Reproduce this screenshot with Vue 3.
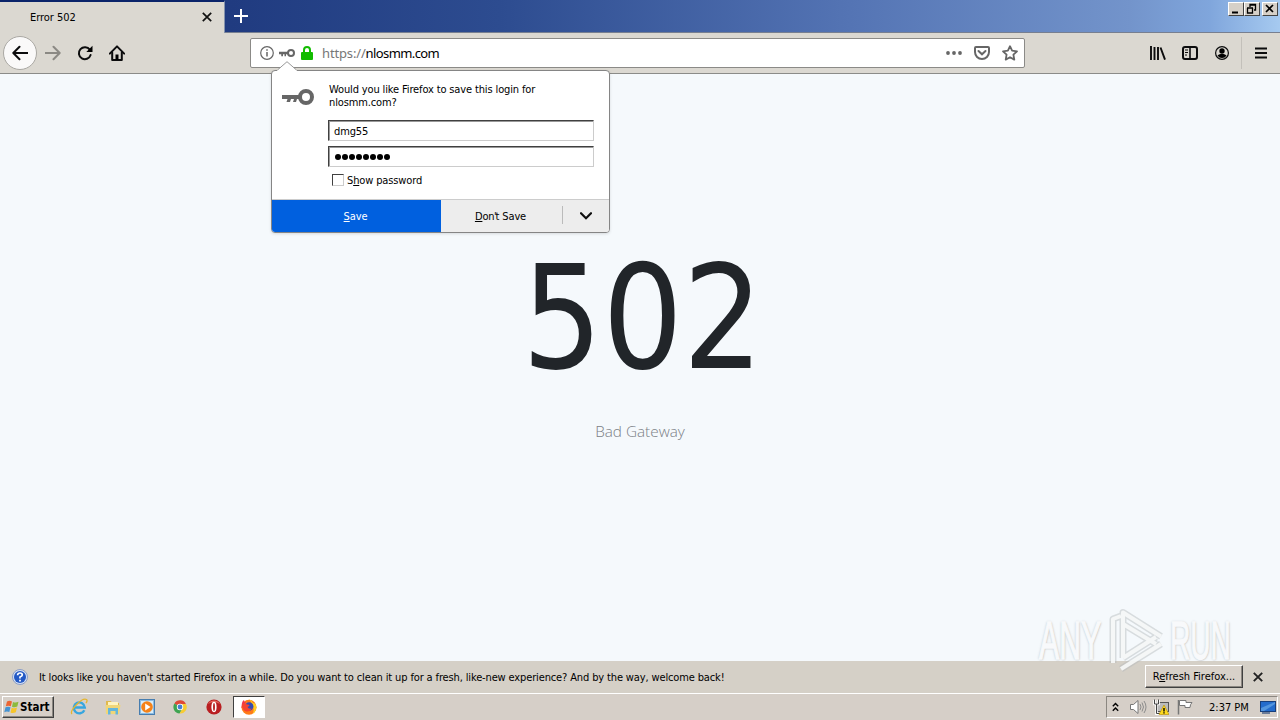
<template>
  <div class="screen">
    <header class="tabstrip">
      <div class="tab">
        <span class="t tab-title">Error 502</span>
        <svg class="tab-close" width="10" height="10" viewBox="0 0 10 10"><path d="M.8.8l8.4 8.4M9.200.8L.8 9.200" stroke="#111" stroke-width="1.7" /></svg>
      </div>
      <svg class="newtab" width="14" height="14" viewBox="0 0 14 14"><path d="M7 0v14M0 7h14" stroke="#fff" stroke-width="2" /></svg>
      <div class="winbtns">
        <span class="wb"><svg width="14" height="12" viewBox="0 0 14 12"><path d="M3 9.500h6" stroke="#000" stroke-width="2" /></svg></span>
        <span class="wb"><svg width="14" height="12" viewBox="0 0 14 12"><path d="M5 4V1.500h5.500V7H9M4.500 2h6.500M2.500 5v5h5V5M2 5h6" fill="none" stroke="#000" stroke-width="1.300" /></svg></span>
        <span class="wb last"><svg width="14" height="12" viewBox="0 0 14 12"><path d="M3 2l7 7M10 2L3 9" stroke="#000" stroke-width="1.700" /></svg></span>
      </div>
    </header>

    <nav class="toolbar">
      <div class="nav-left">
        <span class="back"><svg width="16" height="16" viewBox="0 0 16 16"><path d="M15.500 8H1.500M7.500 1.800L1.300 8l6.200 6.200" class="ln" /></svg></span>
        <svg class="fwd" width="16" height="16" viewBox="0 0 16 16"><path d="M.5 8h14M8.500 1.800L14.700 8l-6.200 6.200" class="ln" /></svg>
        <svg class="reload" width="16" height="16" viewBox="0 0 16 16"><path d="M12.800 4.700A6 6 0 1 0 13.600 10" class="ln" /><path d="M15.500.8v6.200H9.300z" /></svg>
        <svg class="home" width="16" height="16" viewBox="0 0 16 16"><path d="M.8 8.600L8 1.400l7.200 7.200" class="ln" /><path d="M3.200 7.500V15h9.600V7.500" class="ln" /><path d="M6.500 15V9.500h3V15z" /></svg>
      </div>
      <div class="urlbar">
        <svg class="info" width="14" height="14" viewBox="0 0 14 14"><circle cx="7" cy="7" r="6.300" fill="none" stroke="#666" stroke-width="1.200" /><path d="M7 6v4.500M7 3.200v1.600" stroke="#666" stroke-width="1.500" /></svg>
        <svg class="key-s" width="16" height="8" viewBox="0 0 32 16"><path d="M0 5.500h18v5h-4v4h-3v-4H8v4H4.500v-4H0z" fill="#666" /><circle cx="24" cy="8" r="6" fill="none" stroke="#666" stroke-width="4" /></svg>
        <svg class="lock" width="12" height="14" viewBox="0 0 12 14"><path d="M3 7V4a3 3 0 0 1 6 0v3" fill="none" stroke="#12bc00" stroke-width="2" /><rect y="6" width="12" height="8" rx="1" fill="#12bc00" /></svg>
        <span class="url"><i>https://</i>nlosmm.com</span>
        <svg class="dots" width="16" height="4" viewBox="0 0 16 4"><circle v-for="x in [2, 8, 14]" :key="x" :cx="x" cy="2" r="1.900" fill="#666" /></svg>
        <svg class="pocket" width="16" height="14" viewBox="0 0 16 14"><path d="M2 1h12q1 0 1 1v4a7 7 0 0 1-14 0V2q0-1 1-1z" fill="none" stroke="#666" stroke-width="2" /><path d="M4.500 5L8 8.300 11.500 5" fill="none" stroke="#666" stroke-width="2" stroke-linecap="round" /></svg>
        <svg class="star" width="16" height="16" viewBox="0 0 16 16"><path d="M8 1.200l2.100 4.500 4.900.6-3.600 3.400.9 4.900L8 12.200l-4.300 2.400.9-4.900L1 6.300l4.900-.6z" fill="none" stroke="#666" stroke-width="1.800" stroke-linejoin="round" /></svg>
      </div>
      <div class="nav-right">
        <svg width="16" height="14" viewBox="0 0 16 14"><path d="M1 0v14M4.500 1v13M8 1v13M10.500 1.500L15 13.700" stroke="#0c0c0d" stroke-width="1.900" /></svg>
        <svg width="16" height="14" viewBox="0 0 16 14"><rect x="1" y="1" width="14" height="12" rx="2" fill="none" stroke="#0c0c0d" stroke-width="2" /><path d="M8 1v12" stroke="#0c0c0d" stroke-width="1.600" /><path d="M3 4h3M3 6.500h3M3 9h2" stroke="#0c0c0d" /></svg>
        <svg class="user" width="14" height="14" viewBox="0 0 14 14"><circle cx="7" cy="7" r="6.400" fill="none" stroke="#0c0c0d" stroke-width="1.200" /><circle cx="7" cy="5" r="2.700" /><path d="M2.500 9.500Q4 8 5.500 8h3Q10 8 11.500 9.500 10 12 7 12T2.500 9.500z" /></svg>
        <span class="vsep"></span>
        <svg class="menu" width="12" height="12" viewBox="0 0 12 12"><path d="M0 1.500h12M0 6h12M0 10.500h12" stroke="#0c0c0d" stroke-width="1.900" /></svg>
      </div>
    </nav>

    <main class="page">
      <h1>502</h1>
      <p>Bad Gateway</p>
    </main>

    <footer class="notice">
      <svg class="help" width="16" height="16" viewBox="0 0 16 16"><circle cx="8" cy="8" r="7.500" fill="#d5e0f4" stroke="#8b9dc5" /><circle cx="8" cy="8" r="6" fill="#2359c5" /><path d="M5.600 6.200Q5.700 4 8 4t2.300 2Q10.300 7.200 8 8v1.400M8 10.700v1.700" fill="none" stroke="#fff" stroke-width="1.700" /></svg>
      <span class="t msg">It looks like you haven't started Firefox in a while. Do you want to clean it up for a fresh, like-new experience? And by the way, welcome back!</span>
      <button class="t refresh">R<u>e</u>fresh Firefox...</button>
      <svg class="n-close" width="10" height="10" viewBox="0 0 10 10"><path d="M.8.8l8.400 8.400M9.200.8L.8 9.200" stroke="#222" stroke-width="1.900" /></svg>
    </footer>

    <footer class="taskbar">
      <button class="start">
        <svg width="16" height="16" viewBox="0 0 16 16"><path d="M3 2.500q2.500-1.500 5 0L6.800 7.300q-2.500-1.300-5 0z" fill="#ec6532" /><path d="M9 3q2.500 1.300 5.500-.2L13.300 7.500q-2.800 1.400-5.300.2z" fill="#8cba3e" /><path d="M1.500 8.300q2.500-1.300 5 0L5.300 13q-2.500-1.300-5 .2z" fill="#4593d2" /><path d="M7.700 8.700q2.500 1.300 5.300-.1l-1.200 4.700q-2.800 1.500-5.300.2z" fill="#f6c52b" /></svg>
        <b>Start</b>
      </button>
      <div class="apps">
        <svg width="18" height="18" viewBox="0 0 18 18"><path d="M14.300 12.200A5.500 5.500 0 1 1 14.800 9.500H5" fill="none" stroke="#37a6df" stroke-width="2.400" /><path d="M2 16C-1 13 12-1 16.500 1.500q1.300 1.200-.5 3.500" fill="none" stroke="#e5b52d" stroke-width="1.300" /></svg>
        <svg width="18" height="18" viewBox="0 0 18 18"><path d="M2 3h5l1 2h7v11H2z" fill="#e0b94e" /><path d="M4 4h10v5H4z" fill="#fff4c0" /><path d="M1.500 7h15L15 16H2z" fill="#f0d678" /><path d="M4 10h10v6.500h-2.500V13h-5v3.500H4z" fill="#64b6dc" /></svg>
        <svg width="18" height="18" viewBox="0 0 18 18"><rect x="1.500" y="1.500" width="15" height="15" fill="#8bbce3" stroke="#477daf" /><rect x="3" y="3" width="12" height="12" fill="#d9edf9" /><circle cx="9" cy="9" r="5.800" fill="#f58218" /><path d="M7.200 5.500v7L12.500 9z" fill="#fff" /></svg>
        <svg width="18" height="18" viewBox="0 0 18 18"><path d="M9 9L3.400 5.500A6.500 6.500 0 0 1 15 6.200H9z" fill="#df4937" /><path d="M9 9l-5.600-3.500A6.500 6.500 0 0 0 8.500 15.500L12 10z" fill="#3fa452" /><path d="M9 6h6A6.500 6.500 0 0 1 8.500 15.500L12 10z" fill="#f7cc32" /><circle cx="9" cy="9" r="3.200" fill="#fff" /><circle cx="9" cy="9" r="2.400" fill="#467fd1" /></svg>
        <svg width="18" height="18" viewBox="0 0 18 18"><circle cx="9" cy="9" r="7.600" fill="#b91e21" /><path d="M3 6a7 7 0 0 1 12 0Q9 2 3 6z" fill="#e66b60" /><ellipse cx="9" cy="9" rx="2.600" ry="5.200" fill="#fff" /><ellipse cx="9" cy="9" rx="1" ry="4" fill="#b92a2a" /></svg>
      </div>
      <div class="active">
        <svg width="18" height="18" viewBox="0 0 18 18"><circle cx="9" cy="9.300" r="7.500" fill="#ff7b18" /><path d="M9 1q3 1.500 4 4 2-.5 3 2 1.500 6-3.500 9Q16 10 9 1z" fill="#ffcf26" /><path d="M1.700 7Q2 3 4 2q0 2 2 2.500L1.500 10z" fill="#f2374a" /><circle cx="9.200" cy="8.500" r="4.200" fill="#384bb2" /><path d="M2 7q2-2.500 5-.5 2.500 0 2.500 1.200L7.500 9q1 2.500 4.500 1.500Q9 15 5 13q-3-2-3-6z" fill="#f64531" /></svg>
      </div>
      <div class="tray">
        <svg class="chev" width="7" height="10" viewBox="0 0 7 10"><path d="M.8 4.200l2.700-2.700 2.700 2.700M.8 8.700L3.500 6l2.700 2.700" fill="none" stroke="#000" stroke-width="1.400" /></svg>
        <svg class="vol" width="18" height="16" viewBox="0 0 18 16"><path d="M1.500 5.500h3L9 1.500v13l-4.500-4h-3z" fill="#fff" stroke="#777" /><path d="M11 5q2 3 0 6M13 3.500q3 4.500 0 9M15 2q4 6 0 12" fill="none" stroke="#8c8c8c" /></svg>
        <svg class="net" width="16" height="16" viewBox="0 0 16 16"><rect x="4.500" y="3.500" width="11" height="9" fill="#bbb" stroke="#555" /><path d="M1.500 1v4h4V1M3.500 5v10h4" fill="none" stroke="#fff" stroke-width="2.600" /><path d="M1.500.5v4.500h4V.5M3.500 5v9.500H8" fill="none" stroke="#444" /><path d="M11 6l5 9.500H6z" fill="#ffda1e" stroke="#b58b00" stroke-width=".6" /><path d="M11 9v3.500M11 13.300v1.200" stroke="#000" stroke-width="1.400" /></svg>
        <svg class="flag" width="16" height="16" viewBox="0 0 16 16"><path d="M1.500 1v14.500" stroke="#777" stroke-width="1.500" /><path d="M2.500 1.500H9v2h6q-2 2-2 5H8v-2H2.500z" fill="#fff" stroke="#777" /></svg>
        <span class="t clock">2:37 PM</span>
        <svg class="desk" width="16" height="13" viewBox="0 0 16 13"><rect x=".5" y=".5" width="15" height="10" fill="#246ccc" stroke="#183f7b" /><path d="M1 7L15 1v2L4 10H1z" fill="#5396de" /><path d="M2 12h8" stroke="#476189" stroke-width="1.500" /></svg>
      </div>
    </footer>

    <section class="popup">
      <svg class="arrow" width="20" height="10" viewBox="0 0 20 10"><path d="M0 10V9.500L10 .7l10 8.800v.5z" fill="#fff" /><path d="M.5 9L10 .7 19.500 9" fill="none" stroke="#999" /></svg>
      <div class="popup-body">
        <svg class="key" width="32" height="16" viewBox="0 0 32 16"><path d="M0 6h18v4h-3l-1 3h-3l1-3H9l-1 3H4.500l1-3H0z" fill="#666" /><circle cx="24" cy="8" r="6" fill="none" stroke="#666" stroke-width="4" /></svg>
        <div class="popup-form">
          <p class="t ask">Would you like Firefox to save this login for<br><span>nlosmm.com?</span></p>
          <div class="t field">dmg55</div>
          <div class="field pw"><i v-for="n in 8" :key="n"></i></div>
          <label class="t show"><i></i><span>S<u>h</u>ow password</span></label>
        </div>
      </div>
      <div class="t actions">
        <div class="save"><span><u>S</u>ave</span></div>
        <div class="dont"><span><u>D</u>on<span class="apos">'</span>t Save</span></div>
        <div class="more"><svg width="12" height="8" viewBox="0 0 12 8"><path d="M1 1.200l5 5 5-5" fill="none" stroke="#111" stroke-width="2.200" stroke-linecap="round" /></svg></div>
      </div>
    </section>

    <div class="watermark">
      <span class="wm any">ANY</span>
      <svg width="58" height="66" viewBox="0 0 58 66">
        <g fill="none" stroke-linejoin="round">
          <path class="wm-shade" :d="playMark" />
          <path class="wm-line" :d="playMark" />
        </g>
      </svg>
      <span class="wm run">RUN</span>
    </div>
  </div>
</template>

<script setup>
const playMark = 'M5 55V11l8-3M15 50V4.500L53 28.500M15 16l33 20M15 50l33-21M13 61l40-25'
</script>

<style>
body { margin: 0; overflow: hidden; }
</style>

<style scoped>
* { box-sizing: border-box; }
svg { display: block; flex: none; }
.screen { position: relative; width: 1280px; height: 720px; overflow: hidden; display: flex; flex-direction: column; background: #f5f9fc; color: #000; }
.t { font-family: "DejaVu Sans Condensed", "DejaVu Sans", sans-serif; font-stretch: condensed; font-size: 11px; line-height: 13px; letter-spacing: -.135px; white-space: nowrap; }
u { text-underline-offset: 1px; }

.tabstrip { height: 33px; flex: none; display: flex; background: linear-gradient(90deg, #0a246a 0, #203b80 230px, #2d4c90 500px, #5474b4 850px, #7394cb 1130px, #80a6dc 1210px, #a6caf0 1280px); border-bottom: 1px solid #777f90; }
.tab { width: 225px; height: 33px; display: flex; align-items: center; background: #dbd8d1; border-top: 2px solid #0a246a; border-right: 1px solid #8593ad; padding: 0 12px 0 30px; }
.tab-title { flex: 1; letter-spacing: -.05px; }
.tab-close { margin-top: -2px; }
.newtab { margin: 9px 0 0 9px; }
.winbtns { margin-left: auto; display: flex; padding: 2px 2px 0 0; }
.wb { width: 16px; height: 14px; background: #d6d0c8; border: 1px solid; border-color: #fff #444 #444 #fff; overflow: hidden; }
.last { margin-left: 2px; }

.toolbar { height: 41px; flex: none; display: flex; align-items: center; background: #dbd8d1; border-bottom: 1px solid #8b8b88; }
.nav-left { width: 250px; display: flex; align-items: center; }
.ln { fill: none; stroke: #0c0c0d; stroke-width: 2; stroke-linecap: round; stroke-linejoin: round; }
.back { width: 34px; height: 34px; margin-left: 3px; border: 1px solid #aaa8a3; border-radius: 50%; background: #faf9f9; display: grid; place-items: center; }
.fwd { margin-left: 8px; }
.fwd .ln { stroke: #8b8984; }
.reload, .home { margin-left: 16px; }
.urlbar { width: 775px; height: 30px; display: flex; align-items: center; background: #fff; border: 1px solid #8b8a87; border-radius: 2px; padding: 0 6px 0 9px; }
.key-s { margin-left: 5px; }
.lock { margin-left: 6px; }
.url { flex: 1; margin-left: 9px; font: 13px "Noto Sans", sans-serif; letter-spacing: -.6px; }
.url i { font-style: normal; letter-spacing: -.15px; color: #777; }
.pocket { margin-left: 12px; }
.star { margin-left: 12px; }
.nav-right { flex: 1; display: flex; align-items: center; gap: 16px; padding-left: 125px; }
.user { margin-left: 1px; }
.vsep { width: 1px; height: 32px; margin: 0 -4px; background: #c3c0ba; }
.menu { margin-left: 1px; }

.page { flex: 1; display: flex; flex-direction: column; align-items: center; }
h1 { margin: 179px 0 0 5px; font: 400 144px/130px "DejaVu Sans Condensed", "DejaVu Sans", sans-serif; font-stretch: condensed; transform: scaleX(.975); color: #212529; }
.page p { margin: 38px 0 0; font: 300 15.300px/20px "Open Sans", "Noto Sans", sans-serif; color: #7b8085; }

.notice { height: 32px; flex: none; display: flex; align-items: center; background: #d5d0c7; padding: 0 17px 0 12px; }
.msg { margin-left: 11px; flex: 1; }
.refresh { width: 98px; height: 23px; padding: 0; margin-top: -1px; background: #d8d1c9; border: 1px solid; border-color: #fff #404040 #404040 #fff; box-shadow: inset -1px -1px #8b8781; letter-spacing: 0; position: relative; z-index: 2; }
.n-close { margin-left: 10px; }

.taskbar { height: 27px; flex: none; display: flex; align-items: center; background: #d6cfc8; border-top: 1px solid #fff; }
.start { width: 52px; height: 22px; margin-left: 2px; display: flex; align-items: center; padding: 0 1px; background: #d6cfc8; border: 1px solid; border-color: #fff #404040 #404040 #fff; box-shadow: inset -1px -1px #8b8781; }
.start b { font: 700 11.500px "DejaVu Sans Condensed", "DejaVu Sans", sans-serif; font-stretch: condensed; letter-spacing: 0; }
.apps { display: flex; gap: 15.800px; margin-left: 16px; }
.active { width: 32px; height: 22px; margin-left: 10px; background: #fff; border: 1px solid; border-color: #404040 #fff #fff #404040; display: grid; place-items: center; }
.tray { width: 172px; height: 22px; margin: 0 2px 0 auto; display: flex; align-items: center; border: 1px solid; border-color: #8b8781 #fff #fff #8b8781; padding: 0 1px 0 5px; }
.vol { margin-left: 10px; }
.net { margin-left: 6px; }
.flag { margin-left: 8px; }
.clock { margin-left: 16px; flex: 1; letter-spacing: 0; }

/* doorhanger lies over the urlbar and the page */
.popup { position: absolute; left: 271px; top: 70px; width: 339px; height: 163px; display: flex; flex-direction: column; background: #fff; border: 1px solid #858585; border-radius: 4px; box-shadow: 0 1px 3px rgba(0, 0, 0, .12); }
.arrow { position: absolute; left: 5px; top: -10px; }
.popup-body { flex: 1; display: flex; padding: 12px 15px 0 10px; }
.key { margin-top: 6px; }
.popup-form { flex: 1; margin-left: 14px; }
.ask { margin: 0 0 11px 1px; }
.field { height: 21px; margin-bottom: 5px; padding: 4px 5px; border: 1px solid; border-color: #404040 #ccc #ccc #404040; box-shadow: inset 1px 1px #999; }
.pw { display: flex; align-items: center; gap: 1px; padding: 0 6px; }
.pw i { width: 6px; height: 6px; border-radius: 50%; background: #000; }
.show { display: flex; align-items: center; gap: 3px; margin-left: 4px; }
.show i { width: 12px; height: 12px; border: 1px solid; border-color: #404040 #ccc #ccc #404040; }
.show span { padding-top: 2px; }
.actions { height: 33px; display: flex; background: #ededed; border-top: 1px solid #ccc; border-radius: 0 0 3px 3px; overflow: hidden; }
.actions > div { display: grid; place-items: center; }
.save { width: 169px; background: #0060df; color: #fff; padding-right: 2px; }
.dont { width: 121px; padding-right: 2px; }
.apos { margin: 0 -1px 0 -.5px; }
.more { flex: 1; margin: 6px 0 8px; padding-top: 2px; border-left: 1px solid #bbb; }

.watermark { position: absolute; left: 1039px; top: 608px; height: 66px; display: flex; align-items: center; }
.wm { font: 400 53px/56px "Liberation Sans", Arial, sans-serif; color: #f9fafb; -webkit-text-stroke: 1.500px #f9fafb; text-shadow: 0 0 3px #a0a4a7, 1px 1px 2px #b8bbbe; transform-origin: 0 50%; opacity: .8; }
.any { width: 69px; transform: scaleX(.57); }
.run { width: 66px; margin-left: 4px; transform: scaleX(.53); }
.wm-shade { stroke: #b4b8bb; stroke-opacity: .45; stroke-width: 7; }
.wm-line { stroke: #fafbfc; stroke-opacity: .85; stroke-width: 4; }
</style>
